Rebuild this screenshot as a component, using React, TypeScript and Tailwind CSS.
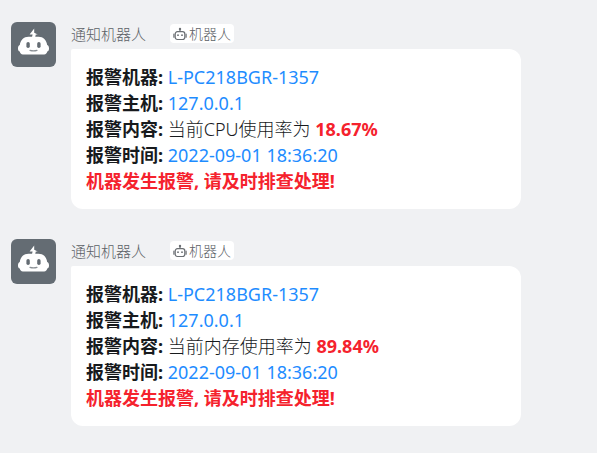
type Alert = {
  id: number;
  machine: string;
  host: string;
  content: string;
  value: string;
  time: string;
};

const alerts: Alert[] = [
  { id: 1, machine: 'L-PC218BGR-1357', host: '127.0.0.1', content: '当前CPU使用率为', value: '18.67%', time: '2022-09-01 18:36:20' },
  { id: 2, machine: 'L-PC218BGR-1357', host: '127.0.0.1', content: '当前内存使用率为', value: '89.84%', time: '2022-09-01 18:36:20' },
];

function Avatar() {
  return (
    <div className="h-[45px] w-[45px] shrink-0 overflow-hidden rounded-md bg-[#646c73]">
      <svg viewBox="0 0 45 45" className="h-full w-full" aria-hidden="true">
        <path d="M23.2 6.500 18.600 12.500h3l-.8 3.500h3.200l.8-3.600h2l-3.600-1.600z" fill="#fff" />
        <path
          d="M17.500 14.700h10c4.700 0 8.100 3.400 8.700 8.300 1.300.5 1.800 1.700 1.800 3.400s-.5 2.800-1.800 3.200c-.3 1.900-1.300 2.800-3.100 2.800H11.900c-1.800 0-2.800-.9-3.100-2.800C7.500 29.200 7 28.100 7 26.400s.5-2.900 1.800-3.400c.6-4.900 4-8.300 8.700-8.300z"
          fill="#fff"
        />
        <rect x="15.400" y="20" width="3.400" height="6" rx="1.700" fill="#646c73" />
        <rect x="26.200" y="20" width="3.400" height="6" rx="1.700" fill="#646c73" />
        <path d="M19 28.300q3.500 1 7 0" fill="none" stroke="#8b9196" strokeWidth="1.200" strokeLinecap="round" />
      </svg>
    </div>
  );
}

function BotIcon() {
  return (
    <svg viewBox="0 0 14 14" className="h-3.5 w-3.5 shrink-0" fill="none" stroke="#6b6f73" aria-hidden="true">
      <rect x="2.200" y="4.700" width="9.600" height="7.800" rx="2.200" strokeWidth="1.200" />
      <path d="M7 4.500V2.800M.9 7.200v3M13.100 7.200v3" strokeWidth="1.200" strokeLinecap="round" />
      <circle cx="7" cy="2" r="1.200" fill="#6b6f73" stroke="none" />
      <circle cx="5" cy="8.200" r=".9" fill="#6b6f73" stroke="none" />
      <circle cx="9" cy="8.200" r=".9" fill="#6b6f73" stroke="none" />
    </svg>
  );
}

function Message({ alert }: { alert: Alert }) {
  return (
    <article className="flex items-start gap-[15px]">
      <Avatar />
      <div className="w-full max-w-[450px]">
        <header className="flex h-[27px] items-start gap-6">
          <span className="text-[15px] leading-6 text-[#5c6166]">通知机器人</span>
          <span className="mt-0.5 flex h-[19px] items-center gap-0.5 rounded bg-white px-[3px] text-sm text-[#5c6166]">
            <BotIcon />
            机器人
          </span>
        </header>
        <div className="rounded-xl rounded-tl-xs bg-white p-[15px] text-lg leading-[26px] text-[#171a1d]">
          <p>
            <b className="font-bold">报警机器:</b> <span className="font-normal text-[#1e8cff]">{alert.machine}</span>
          </p>
          <p>
            <b className="font-bold">报警主机:</b> <span className="font-normal text-[#1e8cff]">{alert.host}</span>
          </p>
          <p>
            <b className="font-bold">报警内容:</b> {alert.content} <b className="font-bold text-[#f5222d]">{alert.value}</b>
          </p>
          <p>
            <b className="font-bold">报警时间:</b> <span className="font-normal text-[#1e8cff]">{alert.time}</span>
          </p>
          <p className="font-bold text-[#f5222d]">机器发生报警, 请及时排查处理!</p>
        </div>
      </div>
    </article>
  );
}

export default function App() {
  return (
    <main className="flex min-h-screen flex-col gap-[30px] bg-[#f0f1f3] px-[11px] pt-[22px] pb-[27px] font-['Noto_Sans','Noto_Sans_CJK_SC',sans-serif] font-light">
      {alerts.map((alert) => (
        <Message key={alert.id} alert={alert} />
      ))}
    </main>
  );
}
